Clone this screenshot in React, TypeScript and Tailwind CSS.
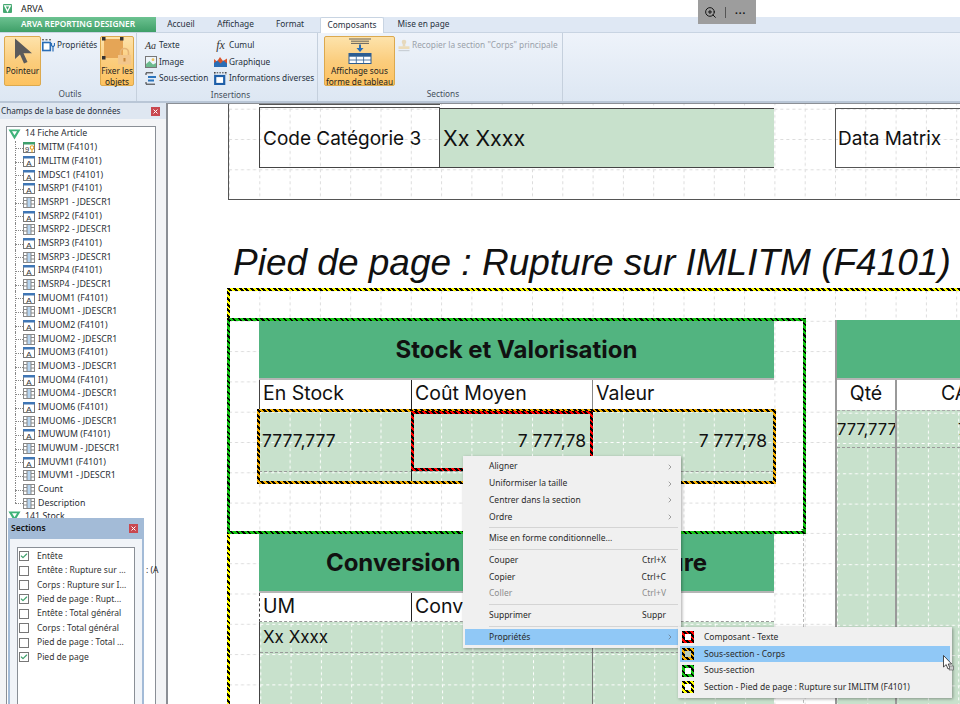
import React from "react";
import { ChevronRight, Check, ZoomIn } from "lucide-react";

const ui = "font-['Noto_Sans',sans-serif]";
const report = "font-['Inter',sans-serif]";

const treeRows = [
  "IMITM (F4101)", "IMLITM (F4101)", "IMDSC1 (F4101)", "IMSRP1 (F4101)", "IMSRP1 - JDESCR1",
  "IMSRP2 (F4101)", "IMSRP2 - JDESCR1", "IMSRP3 (F4101)", "IMSRP3 - JDESCR1", "IMSRP4 (F4101)",
  "IMSRP4 - JDESCR1", "IMUOM1 (F4101)", "IMUOM1 - JDESCR1", "IMUOM2 (F4101)", "IMUOM2 - JDESCR1",
  "IMUOM3 (F4101)", "IMUOM3 - JDESCR1", "IMUOM4 (F4101)", "IMUOM4 - JDESCR1", "IMUOM6 (F4101)",
  "IMUOM6 - JDESCR1", "IMUWUM (F4101)", "IMUWUM - JDESCR1", "IMUVM1 (F4101)", "IMUVM1 - JDESCR1",
  "Count", "Description",
];

const sections = [
  { label: "Entête", on: true },
  { label: "Entête : Rupture sur ...", on: false },
  { label: "Corps : Rupture sur I...", on: false },
  { label: "Pied de page : Rupt...", on: true },
  { label: "Entête : Total général", on: false },
  { label: "Corps : Total général", on: false },
  { label: "Pied de page : Total ...", on: false },
  { label: "Pied de page", on: true },
];

const hatch = {
  yellow: "border-solid [border-image:repeating-linear-gradient(45deg,#000_0,#000_2px,#ffff00_2px,#ffff00_4px)_3]",
  green: "border-solid [border-image:repeating-linear-gradient(45deg,#000_0,#000_1.5px,#12c412_1.5px,#12c412_4px)_3]",
  orange: "border-solid [border-image:repeating-linear-gradient(45deg,#000_0,#000_2px,#f5b000_2px,#f5b000_4px)_3]",
  red: "border-solid [border-image:repeating-linear-gradient(45deg,#000_0,#000_2px,#ff0000_2px,#ff0000_4px)_3]",
};

// dashed design grid, the origin keeps it in phase from one block to the next
const GridLines = ({ id, x, y, color }: { id: string; x: number; y: number; color: string }) => (
  <svg className="absolute inset-0 w-full h-full pointer-events-none">
    <defs>
      <pattern id={id} x={229 - x} y={139 - y} width="30.3" height="30.3" patternUnits="userSpaceOnUse">
        <path d="M0.5 0V30.3M0 0.5H30.3" stroke={color} strokeWidth="1" strokeDasharray="3 3" fill="none" />
      </pattern>
    </defs>
    <rect width="100%" height="100%" fill={`url(#${id})`} />
  </svg>
);

const Logo = () => (
  <svg width="9" height="9" viewBox="0 0 9 9">
    <rect width="9" height="9" rx="1" fill="#45a871" />
    <path d="M1.7 1.8H7.3L4.5 7.4Z" fill="none" stroke="#fff" strokeWidth="1.3" />
  </svg>
);

const TreeV = () => (
  <svg width="13" height="11" viewBox="0 0 13 11">
    <path d="M0.5 0.5H12.5L6.5 10.5Z" fill="#3fb37a" />
    <path d="M4 2.2H9L6.5 6.3Z" fill="#fff" />
  </svg>
);

const FieldIcon = () => (
  <svg width="12" height="11" viewBox="0 0 12 11">
    <rect x="0.5" y="0.5" width="11" height="10" fill="#fff" stroke="#777" />
    <rect x="0" y="0" width="12" height="2.5" fill="#3f76b5" />
    <text x="6" y="9.6" textAnchor="middle" fontSize="8" fontFamily="Liberation Sans" fill="#333">A</text>
  </svg>
);

const KeyIcon = () => (
  <svg width="12" height="11" viewBox="0 0 12 11">
    <rect x="0.5" y="0.5" width="11" height="10" fill="#fff" stroke="#777" />
    <rect x="0" y="0" width="12" height="2.5" fill="#3fa06c" />
    <text x="4" y="9.6" textAnchor="middle" fontSize="7.5" fontFamily="Liberation Sans" fill="#333">9</text>
    <circle cx="9" cy="5.5" r="1.8" fill="none" stroke="#e8a020" strokeWidth="1.1" />
    <path d="M9 7V10.5" stroke="#e8a020" strokeWidth="1.1" />
  </svg>
);

const ColumnIcon = () => (
  <svg width="12" height="11" viewBox="0 0 12 11">
    <rect x="0.5" y="0.5" width="11" height="10" fill="#fff" stroke="#888" />
    <rect x="4" y="1" width="4" height="9" fill="#b7d5f0" />
    <path d="M4 0.5V10.5M8 0.5V10.5M0.5 3.5H4M8 3.5H11.5M0.5 7H4M8 7H11.5" stroke="#888" />
  </svg>
);

const PointerIcon = () => (
  <svg width="22" height="26" viewBox="0 0 22 26">
    <path d="M3 0.5V21L8 16.5L12 25.5L15.5 24L11.5 15.2H20Z" fill="#5b5b5b" />
  </svg>
);

const PropsIcon = () => (
  <svg width="13" height="13" viewBox="0 0 13 13">
    <path d="M0 0.8H10" stroke="#333" strokeDasharray="2 1.5" />
    <rect x="0.8" y="3.5" width="7.5" height="8" fill="#fff" stroke="#2a6db5" strokeWidth="1.6" />
    <path d="M9.5 4V6.5L11 8L12.5 6.5V4M11 8V12.5" fill="none" stroke="#2a6db5" strokeWidth="1.2" />
  </svg>
);

const LockIcon = () => (
  <svg width="30" height="28" viewBox="0 0 30 28">
    <rect x="2" y="2" width="19" height="19" fill="#e5a556" />
    <rect x="0" y="0" width="3.5" height="3.5" fill="#333" />
    <rect x="18" y="0" width="3.5" height="3.5" fill="#333" />
    <rect x="0" y="19" width="3.5" height="3.5" fill="#333" />
    <path d="M18.5 18V15.5A4 4 0 0 1 26.5 15.5V18" fill="none" stroke="#e5b477" strokeWidth="1.6" />
    <rect x="16" y="18" width="13" height="9.5" fill="#f2c68c" />
    <rect x="21.5" y="21" width="2" height="3.5" fill="#c98a3c" />
  </svg>
);

const ImageIcon = () => (
  <svg width="12" height="12" viewBox="0 0 12 12">
    <rect x="0.5" y="0.5" width="11" height="11" fill="#eef5fb" stroke="#777" />
    <circle cx="8" cy="3.7" r="1.4" fill="#efc05c" />
    <path d="M1 8L4.5 5L8 8.5L11 7V11H1Z" fill="#6dbb8e" />
  </svg>
);

const SubSectionIcon = () => (
  <svg width="12" height="13" viewBox="0 0 12 13">
    <path d="M1 0.8H8M1 0.8V3M1 12.2H10M1 10V12.2" stroke="#333" />
    <rect x="3" y="4" width="8" height="2" fill="#2a74bd" />
    <rect x="3" y="7.5" width="6" height="2" fill="#2a74bd" />
  </svg>
);

const ChartIcon = () => (
  <svg width="13" height="11" viewBox="0 0 13 11">
    <path d="M0 11V3L3 5.5L6 1L9 5L13 2.5V11Z" fill="#d9542b" />
    <path d="M0 11V7L3.5 4.5L6.5 7.5L9.5 4.5L13 7.5V11Z" fill="#2a6db5" />
  </svg>
);

const InfoIcon = () => (
  <svg width="13" height="13" viewBox="0 0 13 13">
    <path d="M0 0.8H12M0.8 0V3M12 0V3" stroke="#333" strokeDasharray="1.5 1.2" />
    <rect x="1.2" y="4" width="9" height="8" fill="#fff" stroke="#1f5fa8" strokeWidth="2.2" />
  </svg>
);

const TableIcon = () => (
  <svg width="24" height="26" viewBox="0 0 24 26">
    <path d="M1 1H23M3 3.2H21M3 5.4H21" stroke="#555" strokeWidth="0.9" />
    <path d="M12 6.5V12" stroke="#2a6db5" strokeWidth="2" />
    <path d="M8.5 10H15.5L12 14Z" fill="#2a6db5" />
    <rect x="1" y="15.5" width="22" height="10" fill="#fff" stroke="#2c5d92" />
    <rect x="1" y="15.5" width="22" height="3.2" fill="#2c5d92" />
    <path d="M8.3 18.5V25.5M15.6 18.5V25.5M1 22H23" stroke="#2c5d92" strokeWidth="0.8" />
  </svg>
);

const StampIcon = () => (
  <svg width="12" height="13" viewBox="0 0 12 13">
    <circle cx="6" cy="3" r="2.3" fill="#e6d9bd" />
    <rect x="4.7" y="4.5" width="2.6" height="3" fill="#e6d9bd" />
    <rect x="0.5" y="7.3" width="11" height="2.7" fill="#ecdcb9" />
    <rect x="0.5" y="11" width="11" height="1.2" fill="#c9cfd6" />
  </svg>
);

const CloseBox = () => (
  <span className="w-[9px] h-[9px] bg-[#c9474f] flex items-center justify-center">
    <svg width="5" height="5" viewBox="0 0 5 5">
      <path d="M0.5 0.5L4.5 4.5M4.5 0.5L0.5 4.5" stroke="#fff" strokeWidth="1" />
    </svg>
  </span>
);

const SmallTool = ({ icon, label, muted }: { icon: React.ReactNode; label: string; muted?: boolean }) => (
  <div className={`h-[16.5px] flex items-center gap-[2px] whitespace-nowrap ${muted ? "text-[#9aa1aa]" : "text-[#27313d]"}`}>
    <span className="w-[13px] flex justify-center shrink-0">{icon}</span>
    <span>{label}</span>
  </div>
);

const BigTool = ({ icon, children, className }: { icon: React.ReactNode; children: React.ReactNode; className: string }) => (
  <div className={`h-[50px] rounded-[2px] border border-[#dca94e] bg-gradient-to-b from-[#fde3ab] via-[#fbcd7d] to-[#fdc25f] flex flex-col items-center text-center text-[#1f1f1f] leading-[10.5px] pt-[1px] whitespace-nowrap ${className}`}>
    <div className="h-[26px] flex items-center justify-center shrink-0">{icon}</div>
    <div className="mt-[2px]">{children}</div>
  </div>
);

const Group = ({ label, className, children }: { label: string; className: string; children: React.ReactNode }) => (
  <div className={`flex flex-col border-r border-[#c5d0dd] ${className}`}>
    <div className="flex-1 flex items-start pt-[3px]">{children}</div>
    <div className="h-[15px] text-center text-[#46505c] leading-[16px]">{label}</div>
  </div>
);

const Ribbon = () => (
  <div className={`${ui} text-[8.3px] shrink-0`}>
    <div className="h-[17px] bg-white flex items-center gap-[9px] pl-[3px]">
      <Logo />
      <span className="text-[9px] text-[#222]">ARVA</span>
    </div>
    <div className="h-[16px] bg-[#dfe8f4] flex items-stretch border-b border-[#c8d4e2]">
      <div className="w-[156px] flex items-center justify-center bg-gradient-to-b from-[#6cc291] to-[#3e9f68] text-white font-semibold">
        ARVA REPORTING DESIGNER
      </div>
      <div className="w-[50px] flex items-center justify-center text-[#27313d]">Accueil</div>
      <div className="w-[59px] flex items-center justify-center text-[#27313d]">Affichage</div>
      <div className="w-[37px] ml-[6.5px] flex items-center justify-center text-[#27313d]">Format</div>
      <div className="w-[64px] ml-[11.5px] h-[16px] flex items-center justify-center bg-white border border-b-0 border-[#c8d4e2] rounded-t-[2px] text-[#27313d]">Composants</div>
      <div className="w-[54px] ml-[12.5px] flex items-center justify-center text-[#27313d]">Mise en page</div>
    </div>
    <div className="h-[70px] bg-gradient-to-b from-[#eef3fa] to-[#dde7f3] border-b-2 border-[#b9c6d6] flex">
      <Group label="Outils" className="w-[137px] pl-[4px]">
        <BigTool icon={<PointerIcon />} className="w-[37px]">Pointeur</BigTool>
        <div className="w-[59px] pl-[1px] pt-[1px]">
          <SmallTool icon={<PropsIcon />} label="Propriétés" />
        </div>
        <BigTool icon={<LockIcon />} className="w-[34px]">Fixer les<br />objets</BigTool>
      </Group>
      <Group label="Insertions" className="w-[181px] pl-[7px]">
        <div className="w-[70px] pt-[1px]">
          <SmallTool icon={<span className="font-['Liberation_Serif'] italic text-[10px] text-[#333]">Aa</span>} label="Texte" />
          <SmallTool icon={<ImageIcon />} label="Image" />
          <SmallTool icon={<SubSectionIcon />} label="Sous-section" />
        </div>
        <div className="pt-[1px]">
          <SmallTool icon={<span className="font-['Liberation_Serif'] italic text-[12px] text-[#333]">fx</span>} label="Cumul" />
          <SmallTool icon={<ChartIcon />} label="Graphique" />
          <SmallTool icon={<InfoIcon />} label="Informations diverses" />
        </div>
      </Group>
      <Group label="Sections" className="w-[245px] pl-[6px]">
        <BigTool icon={<TableIcon />} className="w-[71px]">Affichage sous<br />forme de tableau</BigTool>
        <div className="pl-[2px] pt-[1px]">
          <SmallTool icon={<StampIcon />} label={'Recopier la section "Corps" principale'} muted />
        </div>
      </Group>
    </div>
  </div>
);

const TreeRow = ({ label, last }: { label: string; last: boolean }) => (
  <div className="h-[13.68px] flex items-center whitespace-nowrap">
    <span className="relative w-[8px] h-full ml-[8px] shrink-0">
      <span className={`absolute left-0 top-0 border-l border-dotted border-[#888] ${last ? "h-1/2" : "h-full"}`} />
      <span className="absolute left-0 top-1/2 w-full border-t border-dotted border-[#888]" />
    </span>
    <span className="w-[15px] shrink-0">
      {label === "IMITM (F4101)" ? <KeyIcon /> : label.includes("(F4101)") ? <FieldIcon /> : <ColumnIcon />}
    </span>
    <span>{label}</span>
  </div>
);

const LeftPanel = () => (
  <div className={`${ui} w-[166px] shrink-0 flex flex-col bg-[#f3f4f6] text-[8.8px] text-[#2a2f36] overflow-hidden`}>
    <div className="h-[16px] bg-[#dfe7f1] flex items-center justify-between pl-[1px] pr-[6px] shrink-0">
      <span className="text-[8.2px] text-[#27313d]">Champs de la base de données</span>
      <CloseBox />
    </div>
    <div className="flex-1 ml-[6px] mr-[10px] mt-[7px] border border-b-0 border-[#8a8f96] bg-white pt-[1px] overflow-hidden">
      <div className="h-[12px] flex items-center gap-[4px] pl-[1px] mb-[1px]">
        <TreeV />
        <span>14 Fiche Article</span>
      </div>
      {treeRows.map((row, index) => (
        <TreeRow key={row} label={row} last={index === treeRows.length - 1} />
      ))}
      <div className="h-[13px] flex items-center gap-[4px] pl-[1px]">
        <TreeV />
        <span>141 Stock</span>
      </div>
    </div>
  </div>
);

const SectionsPanel = () => (
  <div className={`${ui} absolute left-[8px] top-[518px] w-[136px] h-[186px] bg-[#a3bbd7] px-[2px] flex flex-col text-[8.5px]`}>
    <div className="h-[21px] flex items-center justify-between pl-[1px] pr-[4px] shrink-0">
      <span className="font-semibold text-[#111]">Sections</span>
      <CloseBox />
    </div>
    <div className="flex-1 bg-[#f1f4f8] pt-[8px] pl-[7px] pr-[7px]">
      <div className="h-full bg-white border border-b-0 border-[#8a8f96] pt-[1px] pl-[1px]">
        {sections.map((section) => (
          <div key={section.label} className="h-[14.4px] flex items-center gap-[8px] text-[#333] whitespace-nowrap">
            <span className="w-[10px] h-[10px] border border-[#777] bg-white flex items-center justify-center shrink-0">
              {section.on && <Check size={8} strokeWidth={3.5} className="text-[#3fa06c]" />}
            </span>
            <span>{section.label}</span>
          </div>
        ))}
      </div>
    </div>
  </div>
);

const MenuItem = ({ label, shortcut, arrow, muted, active }: { label: string; shortcut?: string; arrow?: boolean; muted?: boolean; active?: boolean }) => (
  <div className={`h-[16.7px] flex items-center pl-[24px] pr-[5px] ${active ? "bg-[#90c8f6]" : ""} ${muted ? "text-[#8d8d8d]" : "text-[#2a2a2a]"}`}>
    <span className="flex-1">{label}</span>
    {shortcut && <span className="mr-[8px]">{shortcut}</span>}
    {arrow && <ChevronRight size={8} strokeWidth={1.6} className="text-[#555]" />}
  </div>
);

const MenuLine = () => (
  <div className="h-[5px] flex items-center pl-[24px] pr-[1px]">
    <div className="h-px w-full bg-[#d4d4d4]" />
  </div>
);

const subItems = [
  { label: "Composant - Texte", box: `${hatch.red} bg-white` },
  { label: "Sous-section - Corps", box: `${hatch.orange} bg-[#b7cdbb]`, active: true },
  { label: "Sous-section", box: `${hatch.green} bg-white` },
  { label: "Section - Pied de page : Rupture sur IMLITM (F4101)", box: `${hatch.yellow} bg-white` },
];

const ContextMenus = () => (
  <div className={`${ui} text-[8.5px]`}>
    <div className="absolute left-[463px] top-[456px] w-[218px] h-[192px] bg-[#f0f0f0] shadow-[1px_1px_3px_rgba(0,0,0,0.35)] pt-[2.5px] px-[2px]">
      <MenuItem label="Aligner" arrow />
      <MenuItem label="Uniformiser la taille" arrow />
      <MenuItem label="Centrer dans la section" arrow />
      <MenuItem label="Ordre" arrow />
      <MenuLine />
      <MenuItem label="Mise en forme conditionnelle..." />
      <MenuLine />
      <MenuItem label="Couper" shortcut="Ctrl+X" />
      <MenuItem label="Copier" shortcut="Ctrl+C" />
      <MenuItem label="Coller" shortcut="Ctrl+V" muted />
      <MenuLine />
      <MenuItem label="Supprimer" shortcut="Suppr" />
      <MenuLine />
      <MenuItem label="Propriétés" arrow active />
    </div>
    <div className="absolute left-[678px] top-[627px] w-[274px] h-[71px] bg-[#f0f0f0] shadow-[1px_1px_3px_rgba(0,0,0,0.35)] pt-[2px] px-[2px]">
      {subItems.map((item) => (
        <div key={item.label} className={`h-[16.7px] flex items-center pl-[2px] text-[#2a2a2a] ${item.active ? "bg-[#90c8f6]" : ""}`}>
          <span className={`w-[12px] h-[12px] border-[3px] shrink-0 ${item.box}`} />
          <span className="ml-[10px]">{item.label}</span>
        </div>
      ))}
    </div>
    <svg className="absolute left-[943px] top-[655px]" width="11" height="16" viewBox="0 0 11 16">
      <path d="M0.5 0.5V12L3.2 9.6L5 14L7 13.2L5.2 9H8.7Z" fill="#fff" stroke="#222" strokeWidth="0.8" />
      <rect x="6.5" y="11" width="4" height="4" fill="#ccc" stroke="#555" strokeWidth="0.6" />
    </svg>
  </div>
);

const Cell = ({ children, className }: { children?: React.ReactNode; className?: string }) => (
  <div className={`flex items-center px-[3px] overflow-hidden whitespace-nowrap ${className ?? ""}`}>{children}</div>
);

const GreenHead = ({ children }: { children?: React.ReactNode }) => (
  <div className="h-[60px] bg-[#52b480] border-b-2 border-[#b5b5b5] flex items-center justify-center pt-[2px] text-[24px] font-bold text-[#111] whitespace-nowrap">
    {children}
  </div>
);

const TopSection = () => (
  <div className="relative h-[96px] shrink-0 border-l border-b border-[#555]">
    <GridLines id="top" x={229} y={104} color="#dcdcdc" />
    <div className={`${report} absolute left-[30px] top-0 w-[515px] text-[19px] text-[#111]`}>
      <div className="h-[4px] border-y border-[#555] w-[181px]" />
      <div className="grid grid-cols-[181px_334px] h-[60px]">
        <Cell className="border-l border-b border-r border-[#444] px-[2px] pt-[3px]">Code Catégorie 3</Cell>
        <Cell className="bg-[#c8e1cc] border-t border-b border-[#444] text-[21.5px]">Xx Xxxx</Cell>
      </div>
    </div>
    <div className={`${report} absolute left-[606px] top-[4px] w-[200px] h-[60px] border-l border-t border-b border-[#555] flex items-center px-[2px] pt-[2px] text-[19px] text-[#111]`}>
      Data Matrix
    </div>
  </div>
);

const StockTable = () => (
  <div className={`${report} absolute left-[30px] top-[31px] w-[515px] text-[19.5px] text-[#111]`}>
    <GreenHead>Stock et Valorisation</GreenHead>
    <div className="grid grid-cols-[151px_181px_182px] h-[30px] bg-white border-l border-[#444]">
      <Cell className="pb-[3px] px-[2px]">En Stock</Cell>
      <Cell className="pb-[3px] border-l border-[#222]">Coût Moyen</Cell>
      <Cell className="pb-[3px] border-l border-[#888]">Valeur</Cell>
    </div>
    <div className="relative h-[74px] bg-[#c8e1cc] text-[17.5px]">
      <GridLines id="stock" x={259} y={410} color="#ffffff" />
      <div className="absolute left-0 right-0 top-[61px] border-t border-dashed border-[#999]" />
      <div className="relative grid grid-cols-[152px_181px_182px] h-full">
        <Cell className="pb-[12px]">7777,777</Cell>
        <Cell className="justify-end pb-[12px] pr-[6px] border-l border-[#222]">7 777,78</Cell>
        <Cell className="justify-end pb-[12px] pr-[7px] border-l border-[#888]">7 777,78</Cell>
      </div>
    </div>
  </div>
);

const ConversionTable = () => (
  <div className={`${report} absolute left-[30px] top-[243px] w-[515px] h-[172px] border-t border-[#333] text-[19.5px] text-[#111]`}>
    <GreenHead>Conversion de l'Unité de Mesure</GreenHead>
    <div className="grid grid-cols-[151px_181px_182px] h-[29px] bg-white border-l border-[#444] border-b border-dashed border-b-[#999]">
      <Cell className="px-[2px]">UM</Cell>
      <Cell className="border-l border-[#222]">Conversion</Cell>
      <Cell className="border-l border-[#888]" />
    </div>
    <div className="relative h-[84px] bg-[#c8e1cc] border-l border-[#444] text-[17px]">
      <GridLines id="conv" x={259} y={622} color="#ffffff" />
      <div className="absolute left-0 right-0 top-[30px] border-t border-dashed border-[#999]" />
      <div className="relative grid grid-cols-[151px_181px_182px] h-full">
        <Cell className="items-start pt-[3px] px-[2px]">Xx Xxxx</Cell>
        <Cell />
        <Cell className="border-l border-[#777]" />
      </div>
    </div>
  </div>
);

const RightTable = () => (
  <div className={`${report} absolute left-[606px] top-[31px] w-[200px] h-[384px] border-l-2 border-[#999] text-[19.5px] text-[#111]`}>
    <GreenHead />
    <div className="grid grid-cols-[58px_142px] h-[30px] bg-white">
      <Cell className="justify-center pb-[3px]">Qté</Cell>
      <Cell className="border-l-2 border-[#999] pl-[44px] pb-[3px]">CA</Cell>
    </div>
    <div className="relative h-[294px] bg-[#c8e1cc] border-t border-dashed border-[#aaa] text-[16.5px]">
      <GridLines id="right" x={835} y={410} color="#ffffff" />
      <div className="absolute left-0 right-0 top-[36px] border-t border-dashed border-[#999]" />
      <div className="relative grid grid-cols-[58px_142px] h-full">
        <div className="pt-[4px] pr-[2px] text-right leading-[28px] whitespace-nowrap">777,777</div>
        <div className="border-l-2 border-[#999] pt-[4px] pl-[61px] leading-[28px]">7</div>
      </div>
    </div>
  </div>
);

const FooterSection = () => (
  <div className="relative flex-1 border-l border-[#555]">
    <GridLines id="footer" x={229} y={289} color="#dcdcdc" />
    <StockTable />
    <ConversionTable />
    <RightTable />
    <div className="absolute left-[574px] top-[244px] h-[180px] border-l border-dashed border-[#bbb]" />
    <div className={`absolute left-[-2px] top-[-1px] w-[760px] h-[430px] border-[3px] ${hatch.yellow}`} />
    <div className={`absolute left-[-2px] top-[29px] w-[579px] h-[216px] border-[3px] ${hatch.green}`} />
    <svg className="absolute left-[572px] top-[30px]" width="5" height="5" viewBox="0 0 6 6"><path d="M0 0H6V6Z" fill="#0aa50a" /></svg>
    <svg className="absolute left-[572px] top-[240px]" width="5" height="5" viewBox="0 0 6 6"><path d="M6 0V6L0 0Z" fill="#0aa50a" /></svg>
    <div className={`absolute left-[28px] top-[120px] w-[519px] h-[75px] border-[3px] ${hatch.orange}`} />
    <div className={`absolute left-[182px] top-[122px] w-[182px] h-[60px] border-[3px] ${hatch.red}`} />
  </div>
);

const Canvas = () => (
  <div className="flex-1 bg-white border-l-2 border-t border-[#8b8f95] pl-[60px] flex flex-col overflow-hidden">
    <TopSection />
    <div className="h-[89px] shrink-0 flex items-center pl-[5px] pt-[37px] font-['Liberation_Sans',sans-serif] italic text-[37px] text-[#111] whitespace-nowrap">
      Pied de page : Rupture sur IMLITM (F4101)
    </div>
    <FooterSection />
  </div>
);

export default function App() {
  return (
    <div className="relative w-[960px] h-[704px] flex flex-col overflow-hidden bg-white">
      <Ribbon />
      <div className="flex-1 flex min-h-0">
        <LeftPanel />
        <Canvas />
      </div>
      <span className={`${ui} absolute left-[146px] top-[564px] text-[8.5px] text-[#222]`}>: (A</span>
      <SectionsPanel />
      <ContextMenus />
      <div className="absolute left-[698px] top-0 w-[58px] h-[24px] bg-[#9d9d9d] flex items-center pl-[6px] text-[#111]">
        <ZoomIn size={13} strokeWidth={1.8} />
        <span className="ml-[8px] w-px h-[11px] bg-[#555]" />
        <span className="ml-[9px] text-[10px] leading-none tracking-[1px] font-bold pb-[4px]">...</span>
      </div>
    </div>
  );
}
